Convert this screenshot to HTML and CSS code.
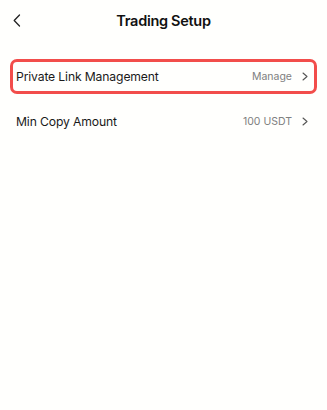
FILE: index.html
```html
<!DOCTYPE html>
<html>
<head>
<meta charset="utf-8">
<link rel="stylesheet" href="styles.css">
</head>
<body>
<div class="page">
  <header class="header">
    <span class="back">
      <svg width="8" height="13" viewBox="0 0 8 13"><path d="M6.5 1 L1.2 6.5 L6.5 12" fill="none" stroke="#222" stroke-width="1.3" stroke-linecap="round" stroke-linejoin="round"/></svg>
    </span>
    <h1 class="title">Trading Setup</h1>
  </header>
  <div class="list">
    <div class="row highlighted">
      <span class="label">Private Link Management</span>
      <span class="value">Manage
        <svg class="chev" width="6" height="9" viewBox="0 0 6 9"><path d="M1 1 L5 4.5 L1 8" fill="none" stroke="#555" stroke-width="1.1" stroke-linecap="round" stroke-linejoin="round"/></svg>
      </span>
    </div>
    <div class="row">
      <span class="label">Min Copy Amount</span>
      <span class="value">100 USDT
        <svg class="chev" width="6" height="9" viewBox="0 0 6 9"><path d="M1 1 L5 4.5 L1 8" fill="none" stroke="#555" stroke-width="1.1" stroke-linecap="round" stroke-linejoin="round"/></svg>
      </span>
    </div>
  </div>
</div>
</body>
</html>
```
FILE: styles.css
```css
html, body {
  margin: 0;
  padding: 0;
  background: #fffffd;
}
body {
  font-family: Inter, "Noto Sans", sans-serif;
  color: #1a1a1a;
  width: 327px;
  height: 410px;
  overflow: hidden;
}
.header {
  height: 41px;
  display: flex;
  align-items: center;
  justify-content: center;
  position: relative;
}
.back {
  position: absolute;
  left: 13px;
  top: 14px;
  display: flex;
}
.title {
  margin: 0;
  font-size: 14.5px;
  font-weight: 600;
  letter-spacing: -0.3px;
  color: #111;
}
.list {
  padding: 18px 10px 0 10px;
  display: flex;
  flex-direction: column;
  gap: 10px;
}
.row {
  height: 35px;
  box-sizing: border-box;
  padding: 0 6px 0 3px;
  display: flex;
  align-items: center;
  justify-content: space-between;
  border: 3px solid transparent;
  border-radius: 7px;
}
.row.highlighted {
  border-color: #f24d4b;
}
.label {
  font-size: 12.2px;
  color: #1a1a1a;
  letter-spacing: -0.15px;
}
.value {
  font-size: 10.5px;
  color: #808080;
  display: flex;
  align-items: center;
  gap: 10px;
}
.chev {
  display: block;
}
```
